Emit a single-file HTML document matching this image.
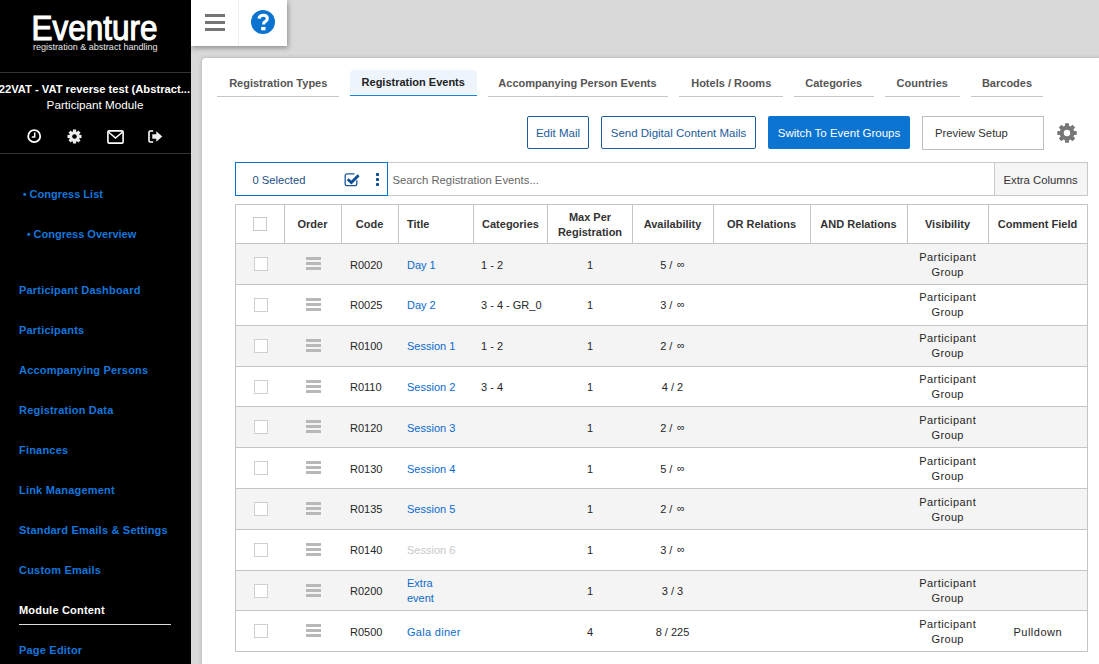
<!DOCTYPE html><html><head><meta charset="utf-8"><style>
*{box-sizing:border-box}
html,body{margin:0;padding:0}
body{width:1099px;height:664px;overflow:hidden;position:relative;background:#d9d9d9;font-family:"Liberation Sans",sans-serif;}
.a,.t{position:absolute}
.t{white-space:nowrap}
</style></head><body>
<div class="a" style="left:0px;top:0px;width:191px;height:664px;background:#000"></div>
<svg class="a" style="left:0;top:0" width="191" height="60"><text x="31.4" y="40.2" textLength="126" lengthAdjust="spacingAndGlyphs" font-family="Liberation Sans" font-size="34.5" fill="#fff" stroke="#fff" stroke-width="1.1">Eventure</text><text x="33" y="50" textLength="124.6" lengthAdjust="spacingAndGlyphs" font-family="Liberation Sans" font-size="9.8" fill="#e8e8e8">registration &amp; abstract handling</text></svg>
<div class="a" style="left:0px;top:72px;width:191px;height:1px;background:#333"></div>
<div class="t" style="left:-8px;top:82px;width:198px;font-size:11.2px;line-height:14px;color:#fff;font-weight:700;text-align:right;overflow:hidden;">22VAT - VAT reverse test (Abstract...</div>
<div class="t " style="left:5.0px;top:97.0px;font-size:11.7px;line-height:15px;color:#fff;width:180px;text-align:center;">Participant Module</div>
<svg class="a" style="left:27px;top:129px" width="15" height="15" viewBox="0 0 15 15"><circle cx="7.2" cy="7.2" r="6" fill="none" stroke="#fff" stroke-width="1.8"/><path d="M7.7 3.6V7.9H4.8" fill="none" stroke="#fff" stroke-width="1.5"/></svg>
<svg class="a" style="left:67px;top:129px" width="15" height="15" viewBox="-7.5 -7.5 15 15"><g fill="#eee"><circle r="5.2"/><rect x="-1.6" y="-7" width="3.2" height="3" transform="rotate(0)"/><rect x="-1.6" y="-7" width="3.2" height="3" transform="rotate(45)"/><rect x="-1.6" y="-7" width="3.2" height="3" transform="rotate(90)"/><rect x="-1.6" y="-7" width="3.2" height="3" transform="rotate(135)"/><rect x="-1.6" y="-7" width="3.2" height="3" transform="rotate(180)"/><rect x="-1.6" y="-7" width="3.2" height="3" transform="rotate(225)"/><rect x="-1.6" y="-7" width="3.2" height="3" transform="rotate(270)"/><rect x="-1.6" y="-7" width="3.2" height="3" transform="rotate(315)"/></g><circle r="2.3" fill="#000"/></svg>
<svg class="a" style="left:107px;top:130px" width="17" height="14" viewBox="0 0 17 14"><rect x="0.9" y="0.9" width="15.2" height="12.2" rx="1.2" fill="none" stroke="#fff" stroke-width="1.6"/><path d="M1.2 1.8L8.5 8L15.8 1.8" fill="none" stroke="#fff" stroke-width="1.5"/></svg>
<svg class="a" style="left:148px;top:130px" width="15" height="13" viewBox="0 0 15 13"><path d="M5.2 1H2.2Q1 1 1 2.2V10.8Q1 12 2.2 12H5.2" fill="none" stroke="#fff" stroke-width="1.6"/><path d="M4.3 4.3H8.3V1.2L14.3 6.5L8.3 11.8V8.7H4.3Z" fill="#eee"/></svg>
<div class="a" style="left:0px;top:153px;width:191px;height:1px;background:#333"></div>
<div class="t " style="left:23px;top:187.0px;font-size:11px;line-height:14px;color:#1476dc;font-weight:700;"><span style="font-size:10px;position:relative;top:-0.5px">&#8226;</span> Congress List</div>
<div class="t " style="left:27px;top:227.0px;font-size:11px;line-height:14px;color:#1476dc;font-weight:700;"><span style="font-size:10px;position:relative;top:-0.5px">&#8226;</span> Congress Overview</div>
<div class="t " style="left:19px;top:283.0px;font-size:11px;line-height:14px;color:#1476dc;font-weight:700;letter-spacing:0.2px">Participant Dashboard</div>
<div class="t " style="left:19px;top:323.0px;font-size:11px;line-height:14px;color:#1476dc;font-weight:700;letter-spacing:0.2px">Participants</div>
<div class="t " style="left:19px;top:363.0px;font-size:11px;line-height:14px;color:#1476dc;font-weight:700;letter-spacing:0.2px">Accompanying Persons</div>
<div class="t " style="left:19px;top:403.0px;font-size:11px;line-height:14px;color:#1476dc;font-weight:700;letter-spacing:0.2px">Registration Data</div>
<div class="t " style="left:19px;top:443.0px;font-size:11px;line-height:14px;color:#1476dc;font-weight:700;letter-spacing:0.2px">Finances</div>
<div class="t " style="left:19px;top:483.0px;font-size:11px;line-height:14px;color:#1476dc;font-weight:700;letter-spacing:0.2px">Link Management</div>
<div class="t " style="left:19px;top:523.0px;font-size:11px;line-height:14px;color:#1476dc;font-weight:700;letter-spacing:0.2px">Standard Emails &amp; Settings</div>
<div class="t " style="left:19px;top:563.0px;font-size:11px;line-height:14px;color:#1476dc;font-weight:700;letter-spacing:0.2px">Custom Emails</div>
<div class="t " style="left:19px;top:603.0px;font-size:11px;line-height:14px;color:#fff;font-weight:700;letter-spacing:0.2px">Module Content</div>
<div class="t " style="left:19px;top:643.0px;font-size:11px;line-height:14px;color:#1476dc;font-weight:700;letter-spacing:0.2px">Page Editor</div>
<div class="a" style="left:19px;top:624px;width:152px;height:1px;background:#ddd"></div>
<div class="a" style="left:191px;top:0;width:96px;height:46px;background:#fff;box-shadow:1px 2px 5px rgba(0,0,0,.35)"></div>
<div class="a" style="left:238px;top:0px;width:1px;height:46px;background:#f0f0f0"></div>
<div class="a" style="left:205px;top:14px;width:20px;height:3px;background:#757575"></div>
<div class="a" style="left:205px;top:21px;width:20px;height:3px;background:#757575"></div>
<div class="a" style="left:205px;top:28px;width:20px;height:3px;background:#757575"></div>
<svg class="a" style="left:251px;top:10px" width="24" height="24" viewBox="0 0 24 24"><circle cx="12" cy="12" r="12" fill="#0a72d1"/><path d="M7.9 8.6Q8.6 5.3 12.2 5.3Q16.3 5.3 16.3 8.6Q16.3 10.6 14.3 11.6Q12.6 12.5 12.6 13.9V14.6" fill="none" stroke="#fff" stroke-width="3.1"/><rect x="10.2" y="16.9" width="4.3" height="3.4" fill="#fff"/></svg>
<div class="a" style="left:202px;top:58px;width:900px;height:610px;background:#fff;border-radius:4px 0 0 0;box-shadow:0 0 4px rgba(0,0,0,.2)"></div>
<div class="a" style="left:217px;top:96px;width:122px;height:1px;background:#c6c6c6"></div>
<div class="t " style="left:217.25px;top:76.0px;font-size:11px;line-height:14px;color:#555;font-weight:700;width:122px;text-align:center;">Registration Types</div>
<div class="a" style="left:350px;top:70px;width:127px;height:24px;background:#edf4fc;border-radius:4px 4px 0 0"></div>
<div class="a" style="left:350px;top:95px;width:127px;height:1px;background:#1283e0"></div>
<div class="t " style="left:349.75px;top:75.0px;font-size:11px;line-height:14px;color:#222;font-weight:700;width:127px;text-align:center;">Registration Events</div>
<div class="a" style="left:488px;top:96px;width:180px;height:1px;background:#c6c6c6"></div>
<div class="t " style="left:487.5px;top:76.0px;font-size:11px;line-height:14px;color:#555;font-weight:700;width:180px;text-align:center;">Accompanying Person Events</div>
<div class="a" style="left:679px;top:96px;width:104px;height:1px;background:#c6c6c6"></div>
<div class="t " style="left:679.25px;top:76.0px;font-size:11px;line-height:14px;color:#555;font-weight:700;width:104px;text-align:center;">Hotels / Rooms</div>
<div class="a" style="left:794px;top:96px;width:80px;height:1px;background:#c6c6c6"></div>
<div class="t " style="left:793.75px;top:76.0px;font-size:11px;line-height:14px;color:#555;font-weight:700;width:80px;text-align:center;">Categories</div>
<div class="a" style="left:885px;top:96px;width:75px;height:1px;background:#c6c6c6"></div>
<div class="t " style="left:884.75px;top:76.0px;font-size:11px;line-height:14px;color:#555;font-weight:700;width:75px;text-align:center;">Countries</div>
<div class="a" style="left:971px;top:96px;width:72px;height:1px;background:#c6c6c6"></div>
<div class="t " style="left:971.0px;top:76.0px;font-size:11px;line-height:14px;color:#555;font-weight:700;width:72px;text-align:center;">Barcodes</div>
<div class="a" style="left:527px;top:116px;width:62px;height:33px;border:1px solid #1d5c9c;border-radius:2px"></div>
<div class="t " style="left:527.0px;top:125.5px;font-size:11.5px;line-height:15px;color:#1d5c9c;width:62px;text-align:center;">Edit Mail</div>
<div class="a" style="left:601px;top:116px;width:155px;height:33px;border:1px solid #1d5c9c;border-radius:2px"></div>
<div class="t " style="left:601.0px;top:125.5px;font-size:11.5px;line-height:15px;color:#1d5c9c;width:155px;text-align:center;">Send Digital Content Mails</div>
<div class="a" style="left:768px;top:116px;width:142px;height:33px;background:#0b74d1;border-radius:2px"></div>
<div class="t " style="left:768.0px;top:125.5px;font-size:11.5px;line-height:15px;color:#fff;width:142px;text-align:center;">Switch To Event Groups</div>
<div class="a" style="left:922px;top:116px;width:122px;height:34px;border:1px solid #bdbdbd"></div>
<div class="t " style="left:935px;top:125.5px;font-size:11.3px;line-height:15px;color:#333;">Preview Setup</div>
<svg class="a" style="left:1057px;top:122.5px" width="20" height="20" viewBox="-10 -10 20 20"><g fill="#777"><circle r="7.4"/><rect x="-2" y="-9.7" width="4" height="4" rx="0.5" transform="rotate(0)"/><rect x="-2" y="-9.7" width="4" height="4" rx="0.5" transform="rotate(45)"/><rect x="-2" y="-9.7" width="4" height="4" rx="0.5" transform="rotate(90)"/><rect x="-2" y="-9.7" width="4" height="4" rx="0.5" transform="rotate(135)"/><rect x="-2" y="-9.7" width="4" height="4" rx="0.5" transform="rotate(180)"/><rect x="-2" y="-9.7" width="4" height="4" rx="0.5" transform="rotate(225)"/><rect x="-2" y="-9.7" width="4" height="4" rx="0.5" transform="rotate(270)"/><rect x="-2" y="-9.7" width="4" height="4" rx="0.5" transform="rotate(315)"/></g><circle r="3.2" fill="#fff"/></svg>
<div class="a" style="left:235px;top:162px;width:153px;height:34px;border:1px solid #0b6fce"></div>
<div class="t " style="left:252.5px;top:172.5px;font-size:11.2px;line-height:15px;color:#1d4f86;">0 Selected</div>
<svg class="a" style="left:344px;top:172px" width="17" height="15" viewBox="0 0 17 15"><path d="M10.5 1.9H3.1Q1.2 1.9 1.2 3.8V11.8Q1.2 13.7 3.1 13.7H10.9Q12.8 13.7 12.8 11.8V8.3" fill="none" stroke="#1a579a" stroke-width="1.3"/><path d="M3.7 7.2L7.4 10.6L14.6 3.3" fill="none" stroke="#0d4f96" stroke-width="2.8"/></svg>
<div class="a" style="left:375.5px;top:173px;width:3.5px;height:3.4px;background:#0d4f96;border-radius:0.8px"></div>
<div class="a" style="left:375.5px;top:178px;width:3.5px;height:3.4px;background:#0d4f96;border-radius:0.8px"></div>
<div class="a" style="left:375.5px;top:183px;width:3.5px;height:3.4px;background:#0d4f96;border-radius:0.8px"></div>
<div class="a" style="left:388px;top:162px;width:700px;height:34px;border:1px solid #c8c8c8;border-left:none"></div>
<div class="t " style="left:392.5px;top:172.5px;font-size:11.3px;line-height:15px;color:#666;">Search Registration Events...</div>
<div class="a" style="left:994px;top:162px;width:94px;height:34px;background:#f5f5f5;border:1px solid #c8c8c8"></div>
<div class="t " style="left:1003.5px;top:172.5px;font-size:11.3px;line-height:15px;color:#333;">Extra Columns</div>
<div class="a" style="left:236px;top:244px;width:851px;height:40px;background:#f4f4f4"></div>
<div class="a" style="left:236px;top:285px;width:851px;height:40px;background:#fff"></div>
<div class="a" style="left:236px;top:326px;width:851px;height:40px;background:#f4f4f4"></div>
<div class="a" style="left:236px;top:367px;width:851px;height:39px;background:#fff"></div>
<div class="a" style="left:236px;top:407px;width:851px;height:40px;background:#f4f4f4"></div>
<div class="a" style="left:236px;top:448px;width:851px;height:40px;background:#fff"></div>
<div class="a" style="left:236px;top:489px;width:851px;height:40px;background:#f4f4f4"></div>
<div class="a" style="left:236px;top:530px;width:851px;height:40px;background:#fff"></div>
<div class="a" style="left:236px;top:571px;width:851px;height:39px;background:#f4f4f4"></div>
<div class="a" style="left:236px;top:611px;width:851px;height:40px;background:#fff"></div>
<div class="a" style="left:235px;top:204px;width:853px;height:1px;background:#c4c4c4"></div>
<div class="a" style="left:235px;top:243px;width:853px;height:1px;background:#c4c4c4"></div>
<div class="a" style="left:235px;top:284px;width:853px;height:1px;background:#c4c4c4"></div>
<div class="a" style="left:235px;top:325px;width:853px;height:1px;background:#c4c4c4"></div>
<div class="a" style="left:235px;top:366px;width:853px;height:1px;background:#c4c4c4"></div>
<div class="a" style="left:235px;top:406px;width:853px;height:1px;background:#c4c4c4"></div>
<div class="a" style="left:235px;top:447px;width:853px;height:1px;background:#c4c4c4"></div>
<div class="a" style="left:235px;top:488px;width:853px;height:1px;background:#c4c4c4"></div>
<div class="a" style="left:235px;top:529px;width:853px;height:1px;background:#c4c4c4"></div>
<div class="a" style="left:235px;top:570px;width:853px;height:1px;background:#c4c4c4"></div>
<div class="a" style="left:235px;top:610px;width:853px;height:1px;background:#c4c4c4"></div>
<div class="a" style="left:235px;top:651px;width:853px;height:1px;background:#c4c4c4"></div>
<div class="a" style="left:235px;top:204px;width:1px;height:447px;background:#c4c4c4"></div>
<div class="a" style="left:284px;top:204px;width:1px;height:39px;background:#c4c4c4"></div>
<div class="a" style="left:341px;top:204px;width:1px;height:39px;background:#c4c4c4"></div>
<div class="a" style="left:398px;top:204px;width:1px;height:39px;background:#c4c4c4"></div>
<div class="a" style="left:473px;top:204px;width:1px;height:39px;background:#c4c4c4"></div>
<div class="a" style="left:547px;top:204px;width:1px;height:39px;background:#c4c4c4"></div>
<div class="a" style="left:632px;top:204px;width:1px;height:39px;background:#c4c4c4"></div>
<div class="a" style="left:713px;top:204px;width:1px;height:39px;background:#c4c4c4"></div>
<div class="a" style="left:810px;top:204px;width:1px;height:39px;background:#c4c4c4"></div>
<div class="a" style="left:907px;top:204px;width:1px;height:39px;background:#c4c4c4"></div>
<div class="a" style="left:988px;top:204px;width:1px;height:39px;background:#c4c4c4"></div>
<div class="a" style="left:1087px;top:204px;width:1px;height:447px;background:#c4c4c4"></div>
<div class="a" style="left:235px;top:204px;width:1px;height:448px;background:#c4c4c4"></div>
<div class="a" style="left:1087px;top:204px;width:1px;height:448px;background:#c4c4c4"></div>
<div class="a" style="left:253px;top:217px;width:14px;height:14px;border:1px solid #c8c8c8;background:#fff"></div>
<div class="t " style="left:284.0px;top:217.0px;font-size:11px;line-height:14px;color:#333;font-weight:700;width:57px;text-align:center;">Order</div>
<div class="t " style="left:341.0px;top:217.0px;font-size:11px;line-height:14px;color:#333;font-weight:700;width:57px;text-align:center;">Code</div>
<div class="t " style="left:407px;top:217.0px;font-size:11px;line-height:14px;color:#333;font-weight:700;">Title</div>
<div class="t " style="left:473.5px;top:217.0px;font-size:11px;line-height:14px;color:#333;font-weight:700;width:74px;text-align:center;">Categories</div>
<div class="t " style="left:547.5px;top:210.0px;font-size:11px;line-height:14px;color:#333;font-weight:700;width:85px;text-align:center;">Max Per</div>
<div class="t " style="left:547.5px;top:225.0px;font-size:11px;line-height:14px;color:#333;font-weight:700;width:85px;text-align:center;">Registration</div>
<div class="t " style="left:632.0px;top:217.0px;font-size:11px;line-height:14px;color:#333;font-weight:700;width:81px;text-align:center;">Availability</div>
<div class="t " style="left:713.0px;top:217.0px;font-size:11px;line-height:14px;color:#333;font-weight:700;width:97px;text-align:center;">OR Relations</div>
<div class="t " style="left:810.0px;top:217.0px;font-size:11px;line-height:14px;color:#333;font-weight:700;width:97px;text-align:center;">AND Relations</div>
<div class="t " style="left:907.0px;top:217.0px;font-size:11px;line-height:14px;color:#333;font-weight:700;width:81px;text-align:center;">Visibility</div>
<div class="t " style="left:988.0px;top:217.0px;font-size:11px;line-height:14px;color:#333;font-weight:700;width:99px;text-align:center;">Comment Field</div>
<div class="a" style="left:254px;top:257px;width:14px;height:14px;border:1px solid #cfcfcf;background:#fff"></div>
<div class="a" style="left:305.5px;top:257px;width:15.5px;height:3px;background:#b8b8b8"></div>
<div class="a" style="left:305.5px;top:262px;width:15.5px;height:3px;background:#b8b8b8"></div>
<div class="a" style="left:305.5px;top:267px;width:15.5px;height:3px;background:#b8b8b8"></div>
<div class="t " style="left:350px;top:258.0px;font-size:11px;line-height:14px;color:#262626;">R0020</div>
<div class="t " style="left:407px;top:258.0px;font-size:11px;line-height:14px;color:#0a6acc;">Day 1</div>
<div class="t " style="left:481px;top:258.0px;font-size:11px;line-height:14px;color:#262626;">1 - 2</div>
<div class="t " style="left:547.5px;top:258.0px;font-size:11px;line-height:14px;color:#262626;width:85px;text-align:center;">1</div>
<div class="t " style="left:632.0px;top:258.0px;font-size:11px;line-height:14px;color:#262626;width:81px;text-align:center;">5 / <span style="margin-left:1.5px;position:relative;top:-1px">&#8734;</span></div>
<div class="t " style="left:907.0px;top:250.0px;font-size:11px;line-height:14px;color:#262626;width:81px;text-align:center;letter-spacing:0.45px;text-indent:0.45px">Participant</div>
<div class="t " style="left:907.0px;top:265.0px;font-size:11px;line-height:14px;color:#262626;width:81px;text-align:center;letter-spacing:0.35px;text-indent:0.35px">Group</div>
<div class="a" style="left:254px;top:298px;width:14px;height:14px;border:1px solid #cfcfcf;background:#fff"></div>
<div class="a" style="left:305.5px;top:298px;width:15.5px;height:3px;background:#b8b8b8"></div>
<div class="a" style="left:305.5px;top:303px;width:15.5px;height:3px;background:#b8b8b8"></div>
<div class="a" style="left:305.5px;top:308px;width:15.5px;height:3px;background:#b8b8b8"></div>
<div class="t " style="left:350px;top:298.0px;font-size:11px;line-height:14px;color:#262626;">R0025</div>
<div class="t " style="left:407px;top:298.0px;font-size:11px;line-height:14px;color:#0a6acc;">Day 2</div>
<div class="t " style="left:481px;top:298.0px;font-size:11px;line-height:14px;color:#262626;">3 - 4 - GR_0</div>
<div class="t " style="left:547.5px;top:298.0px;font-size:11px;line-height:14px;color:#262626;width:85px;text-align:center;">1</div>
<div class="t " style="left:632.0px;top:298.0px;font-size:11px;line-height:14px;color:#262626;width:81px;text-align:center;">3 / <span style="margin-left:1.5px;position:relative;top:-1px">&#8734;</span></div>
<div class="t " style="left:907.0px;top:290.0px;font-size:11px;line-height:14px;color:#262626;width:81px;text-align:center;letter-spacing:0.45px;text-indent:0.45px">Participant</div>
<div class="t " style="left:907.0px;top:305.0px;font-size:11px;line-height:14px;color:#262626;width:81px;text-align:center;letter-spacing:0.35px;text-indent:0.35px">Group</div>
<div class="a" style="left:254px;top:339px;width:14px;height:14px;border:1px solid #cfcfcf;background:#fff"></div>
<div class="a" style="left:305.5px;top:339px;width:15.5px;height:3px;background:#b8b8b8"></div>
<div class="a" style="left:305.5px;top:344px;width:15.5px;height:3px;background:#b8b8b8"></div>
<div class="a" style="left:305.5px;top:349px;width:15.5px;height:3px;background:#b8b8b8"></div>
<div class="t " style="left:350px;top:339.0px;font-size:11px;line-height:14px;color:#262626;">R0100</div>
<div class="t " style="left:407px;top:339.0px;font-size:11px;line-height:14px;color:#0a6acc;">Session 1</div>
<div class="t " style="left:481px;top:339.0px;font-size:11px;line-height:14px;color:#262626;">1 - 2</div>
<div class="t " style="left:547.5px;top:339.0px;font-size:11px;line-height:14px;color:#262626;width:85px;text-align:center;">1</div>
<div class="t " style="left:632.0px;top:339.0px;font-size:11px;line-height:14px;color:#262626;width:81px;text-align:center;">2 / <span style="margin-left:1.5px;position:relative;top:-1px">&#8734;</span></div>
<div class="t " style="left:907.0px;top:331.0px;font-size:11px;line-height:14px;color:#262626;width:81px;text-align:center;letter-spacing:0.45px;text-indent:0.45px">Participant</div>
<div class="t " style="left:907.0px;top:346.0px;font-size:11px;line-height:14px;color:#262626;width:81px;text-align:center;letter-spacing:0.35px;text-indent:0.35px">Group</div>
<div class="a" style="left:254px;top:380px;width:14px;height:14px;border:1px solid #cfcfcf;background:#fff"></div>
<div class="a" style="left:305.5px;top:380px;width:15.5px;height:3px;background:#b8b8b8"></div>
<div class="a" style="left:305.5px;top:385px;width:15.5px;height:3px;background:#b8b8b8"></div>
<div class="a" style="left:305.5px;top:390px;width:15.5px;height:3px;background:#b8b8b8"></div>
<div class="t " style="left:350px;top:380.0px;font-size:11px;line-height:14px;color:#262626;">R0110</div>
<div class="t " style="left:407px;top:380.0px;font-size:11px;line-height:14px;color:#0a6acc;">Session 2</div>
<div class="t " style="left:481px;top:380.0px;font-size:11px;line-height:14px;color:#262626;">3 - 4</div>
<div class="t " style="left:547.5px;top:380.0px;font-size:11px;line-height:14px;color:#262626;width:85px;text-align:center;">1</div>
<div class="t " style="left:632.0px;top:380.0px;font-size:11px;line-height:14px;color:#262626;width:81px;text-align:center;">4 / 2</div>
<div class="t " style="left:907.0px;top:372.0px;font-size:11px;line-height:14px;color:#262626;width:81px;text-align:center;letter-spacing:0.45px;text-indent:0.45px">Participant</div>
<div class="t " style="left:907.0px;top:387.0px;font-size:11px;line-height:14px;color:#262626;width:81px;text-align:center;letter-spacing:0.35px;text-indent:0.35px">Group</div>
<div class="a" style="left:254px;top:420px;width:14px;height:14px;border:1px solid #cfcfcf;background:#fff"></div>
<div class="a" style="left:305.5px;top:420px;width:15.5px;height:3px;background:#b8b8b8"></div>
<div class="a" style="left:305.5px;top:425px;width:15.5px;height:3px;background:#b8b8b8"></div>
<div class="a" style="left:305.5px;top:430px;width:15.5px;height:3px;background:#b8b8b8"></div>
<div class="t " style="left:350px;top:421.0px;font-size:11px;line-height:14px;color:#262626;">R0120</div>
<div class="t " style="left:407px;top:421.0px;font-size:11px;line-height:14px;color:#0a6acc;">Session 3</div>
<div class="t " style="left:547.5px;top:421.0px;font-size:11px;line-height:14px;color:#262626;width:85px;text-align:center;">1</div>
<div class="t " style="left:632.0px;top:421.0px;font-size:11px;line-height:14px;color:#262626;width:81px;text-align:center;">2 / <span style="margin-left:1.5px;position:relative;top:-1px">&#8734;</span></div>
<div class="t " style="left:907.0px;top:413.0px;font-size:11px;line-height:14px;color:#262626;width:81px;text-align:center;letter-spacing:0.45px;text-indent:0.45px">Participant</div>
<div class="t " style="left:907.0px;top:428.0px;font-size:11px;line-height:14px;color:#262626;width:81px;text-align:center;letter-spacing:0.35px;text-indent:0.35px">Group</div>
<div class="a" style="left:254px;top:461px;width:14px;height:14px;border:1px solid #cfcfcf;background:#fff"></div>
<div class="a" style="left:305.5px;top:461px;width:15.5px;height:3px;background:#b8b8b8"></div>
<div class="a" style="left:305.5px;top:466px;width:15.5px;height:3px;background:#b8b8b8"></div>
<div class="a" style="left:305.5px;top:471px;width:15.5px;height:3px;background:#b8b8b8"></div>
<div class="t " style="left:350px;top:462.0px;font-size:11px;line-height:14px;color:#262626;">R0130</div>
<div class="t " style="left:407px;top:462.0px;font-size:11px;line-height:14px;color:#0a6acc;">Session 4</div>
<div class="t " style="left:547.5px;top:462.0px;font-size:11px;line-height:14px;color:#262626;width:85px;text-align:center;">1</div>
<div class="t " style="left:632.0px;top:462.0px;font-size:11px;line-height:14px;color:#262626;width:81px;text-align:center;">5 / <span style="margin-left:1.5px;position:relative;top:-1px">&#8734;</span></div>
<div class="t " style="left:907.0px;top:454.0px;font-size:11px;line-height:14px;color:#262626;width:81px;text-align:center;letter-spacing:0.45px;text-indent:0.45px">Participant</div>
<div class="t " style="left:907.0px;top:469.0px;font-size:11px;line-height:14px;color:#262626;width:81px;text-align:center;letter-spacing:0.35px;text-indent:0.35px">Group</div>
<div class="a" style="left:254px;top:502px;width:14px;height:14px;border:1px solid #cfcfcf;background:#fff"></div>
<div class="a" style="left:305.5px;top:502px;width:15.5px;height:3px;background:#b8b8b8"></div>
<div class="a" style="left:305.5px;top:507px;width:15.5px;height:3px;background:#b8b8b8"></div>
<div class="a" style="left:305.5px;top:512px;width:15.5px;height:3px;background:#b8b8b8"></div>
<div class="t " style="left:350px;top:502.0px;font-size:11px;line-height:14px;color:#262626;">R0135</div>
<div class="t " style="left:407px;top:502.0px;font-size:11px;line-height:14px;color:#0a6acc;">Session 5</div>
<div class="t " style="left:547.5px;top:502.0px;font-size:11px;line-height:14px;color:#262626;width:85px;text-align:center;">1</div>
<div class="t " style="left:632.0px;top:502.0px;font-size:11px;line-height:14px;color:#262626;width:81px;text-align:center;">2 / <span style="margin-left:1.5px;position:relative;top:-1px">&#8734;</span></div>
<div class="t " style="left:907.0px;top:495.0px;font-size:11px;line-height:14px;color:#262626;width:81px;text-align:center;letter-spacing:0.45px;text-indent:0.45px">Participant</div>
<div class="t " style="left:907.0px;top:510.0px;font-size:11px;line-height:14px;color:#262626;width:81px;text-align:center;letter-spacing:0.35px;text-indent:0.35px">Group</div>
<div class="a" style="left:254px;top:543px;width:14px;height:14px;border:1px solid #cfcfcf;background:#fff"></div>
<div class="a" style="left:305.5px;top:543px;width:15.5px;height:3px;background:#b8b8b8"></div>
<div class="a" style="left:305.5px;top:548px;width:15.5px;height:3px;background:#b8b8b8"></div>
<div class="a" style="left:305.5px;top:553px;width:15.5px;height:3px;background:#b8b8b8"></div>
<div class="t " style="left:350px;top:543.0px;font-size:11px;line-height:14px;color:#262626;">R0140</div>
<div class="t " style="left:407px;top:543.0px;font-size:11px;line-height:14px;color:#c8c8c8;">Session 6</div>
<div class="t " style="left:547.5px;top:543.0px;font-size:11px;line-height:14px;color:#262626;width:85px;text-align:center;">1</div>
<div class="t " style="left:632.0px;top:543.0px;font-size:11px;line-height:14px;color:#262626;width:81px;text-align:center;">3 / <span style="margin-left:1.5px;position:relative;top:-1px">&#8734;</span></div>
<div class="a" style="left:254px;top:584px;width:14px;height:14px;border:1px solid #cfcfcf;background:#fff"></div>
<div class="a" style="left:305.5px;top:584px;width:15.5px;height:3px;background:#b8b8b8"></div>
<div class="a" style="left:305.5px;top:589px;width:15.5px;height:3px;background:#b8b8b8"></div>
<div class="a" style="left:305.5px;top:594px;width:15.5px;height:3px;background:#b8b8b8"></div>
<div class="t " style="left:350px;top:584.0px;font-size:11px;line-height:14px;color:#262626;">R0200</div>
<div class="t " style="left:407px;top:576.0px;font-size:11px;line-height:14px;color:#0a6acc;">Extra</div>
<div class="t " style="left:407px;top:591.0px;font-size:11px;line-height:14px;color:#0a6acc;">event</div>
<div class="t " style="left:547.5px;top:584.0px;font-size:11px;line-height:14px;color:#262626;width:85px;text-align:center;">1</div>
<div class="t " style="left:632.0px;top:584.0px;font-size:11px;line-height:14px;color:#262626;width:81px;text-align:center;">3 / 3</div>
<div class="t " style="left:907.0px;top:576.0px;font-size:11px;line-height:14px;color:#262626;width:81px;text-align:center;letter-spacing:0.45px;text-indent:0.45px">Participant</div>
<div class="t " style="left:907.0px;top:591.0px;font-size:11px;line-height:14px;color:#262626;width:81px;text-align:center;letter-spacing:0.35px;text-indent:0.35px">Group</div>
<div class="a" style="left:254px;top:624px;width:14px;height:14px;border:1px solid #cfcfcf;background:#fff"></div>
<div class="a" style="left:305.5px;top:624px;width:15.5px;height:3px;background:#b8b8b8"></div>
<div class="a" style="left:305.5px;top:629px;width:15.5px;height:3px;background:#b8b8b8"></div>
<div class="a" style="left:305.5px;top:634px;width:15.5px;height:3px;background:#b8b8b8"></div>
<div class="t " style="left:350px;top:625.0px;font-size:11px;line-height:14px;color:#262626;">R0500</div>
<div class="t " style="left:407px;top:625.0px;font-size:11px;line-height:14px;color:#0a6acc;letter-spacing:0.3px">Gala diner</div>
<div class="t " style="left:547.5px;top:625.0px;font-size:11px;line-height:14px;color:#262626;width:85px;text-align:center;">4</div>
<div class="t " style="left:632.0px;top:625.0px;font-size:11px;line-height:14px;color:#262626;width:81px;text-align:center;">8 / 225</div>
<div class="t " style="left:907.0px;top:617.0px;font-size:11px;line-height:14px;color:#262626;width:81px;text-align:center;letter-spacing:0.45px;text-indent:0.45px">Participant</div>
<div class="t " style="left:907.0px;top:632.0px;font-size:11px;line-height:14px;color:#262626;width:81px;text-align:center;letter-spacing:0.35px;text-indent:0.35px">Group</div>
<div class="t " style="left:988.0px;top:625.0px;font-size:11px;line-height:14px;color:#262626;width:99px;text-align:center;letter-spacing:0.5px;text-indent:0.5px">Pulldown</div>
</body></html>
